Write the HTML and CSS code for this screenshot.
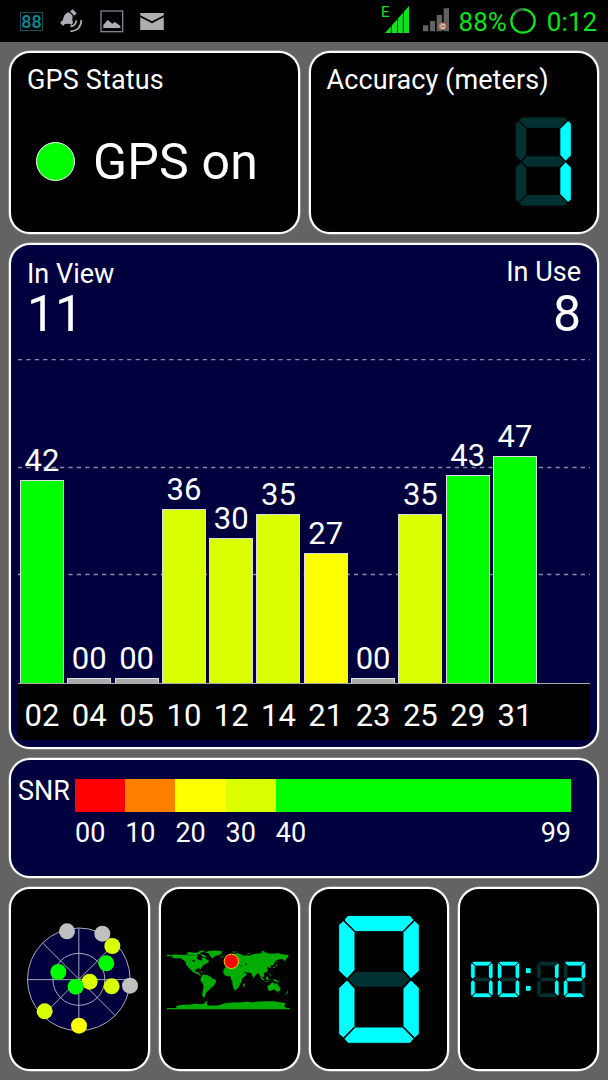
FILE: index.html
```html
<!DOCTYPE html>
<html lang="en">
<head>
<meta charset="utf-8">
<title>GPS Status</title>
<link rel="stylesheet" href="styles.css">
</head>
<body>
<svg class="defs" width="0" height="0" aria-hidden="true">
  <defs>
    <polygon id="a" points="28,0 214,0 226,14 192,49 50,49 16,14"/>
    <polygon id="f" points="14,16 49,51 49,164 25,190 0,166 0,28"/>
    <use id="b" href="#f" transform="translate(242 0) scale(-1 1)"/>
    <use id="e" href="#f" transform="translate(0 384) scale(1 -1)"/>
    <use id="c" href="#f" transform="translate(242 384) scale(-1 -1)"/>
    <use id="d" href="#a" transform="translate(0 384) scale(1 -1)"/>
    <polygon id="g" points="27,192 51,168 191,168 215,192 191,216 51,216"/>
    <g id="zero"><use href="#a"/><use href="#b"/><use href="#c"/><use href="#d"/><use href="#e"/><use href="#f"/><use href="#g" class="off"/></g>
    <g id="one"><g class="off"><use href="#a"/><use href="#d"/><use href="#e"/><use href="#f"/><use href="#g"/></g><use href="#b"/><use href="#c"/></g>
    <g id="two"><g class="off"><use href="#c"/><use href="#f"/></g><use href="#a"/><use href="#b"/><use href="#d"/><use href="#e"/><use href="#g"/></g>
  </defs>
</svg>

<header class="statusbar">
  <div class="notifications">
    <span class="lcd-badge">88</span>
    <svg class="i-sat" viewBox="176 28 72 72">
      <g fill="#aeaeb8">
        <path d="M192 47l10-9 6 1 9 9-1 12 2 10-4 5-8-3-13 1-7-8z"/>
        <path d="M209 35l8-6 12 12-7 7zM179 69l8-7 9 9-8 8z"/>
      </g>
      <g fill="none" stroke="#aeaeb8" stroke-width="5"><path d="M228 62Q227 79 210 80M243 61Q242 93 210 95"/></g>
    </svg>
    <svg class="i-img" viewBox="299 29 72 69"><rect x="302" y="32" width="65" height="62" fill="none" stroke="#83808f" stroke-width="4"/><path d="M309 83V74L322 59 336 70 344 65 360 77V83z" fill="#aeaeb8"/></svg>
    <svg class="i-mail" viewBox="420 38 72 52"><path d="M420 38h72v7l-36 18-36-18zM420 51l36 18 36-18v39h-72z" fill="#aeaeb0"/></svg>
  </div>
  <div class="system">
    <span class="net">E</span>
    <svg class="i-signal" viewBox="72 18 72 81"><path d="M72 99L144 18V99z" fill="#0be31d"/><path d="M91 18V99M109.500 18V99M127 18V99" stroke="#000" stroke-width="2.500"/></svg>
    <svg class="i-signal2" viewBox="186 24 78 72"><path d="M186 76h16v18h-16zM207 63h15v31h-15zM227 45h16v49h-16zM248 25h16v69h-16z" fill="#626262"/><circle cx="245" cy="79" r="10" fill="#bbb" stroke="#d8602c" stroke-width="4" stroke-dasharray="7 4"/><path d="M240 79h10" stroke="#e33" stroke-width="3"/></svg>
    <span class="pct">88%</span>
    <svg class="i-ring" viewBox="449 23 78 78"><circle cx="488" cy="62" r="35" fill="none" stroke="#0be31d" stroke-width="7"/><path d="M464 36A35 35 0 0 1 488 27" fill="none" stroke="#555" stroke-width="7"/></svg>
    <span class="time">0:12</span>
  </div>
</header>

<main class="board">
  <section class="card status">
    <h2>GPS Status</h2>
    <div class="state"><i class="led"></i><span>GPS on</span></div>
  </section>
  <section class="card accuracy">
    <h2>Accuracy (meters)</h2>
    <svg class="digit" viewBox="0 0 242 384"><use href="#one"/></svg>
  </section>

  <section class="card chart">
    <div class="counts">
      <div><h2>In View</h2><b>11</b></div>
      <div class="right"><h2>In Use</h2><b>8</b></div>
    </div>
    <div class="plot">
      <svg class="gridlines" width="572" height="217"><path d="M0 .5H572M0 108.500H572M0 215.500H572"/></svg>
      <div class="bars">
        <div class="col"><span>42</span><i class="green" style="height:203px"></i></div>
        <div class="col"><span>00</span><i class="none" style="height:5px"></i></div>
        <div class="col"><span>00</span><i class="none" style="height:5px"></i></div>
        <div class="col"><span>36</span><i class="lime" style="height:174px"></i></div>
        <div class="col"><span>30</span><i class="lime" style="height:145px"></i></div>
        <div class="col"><span>35</span><i class="lime" style="height:169px"></i></div>
        <div class="col"><span>27</span><i class="yellow" style="height:130px"></i></div>
        <div class="col"><span>00</span><i class="none" style="height:5px"></i></div>
        <div class="col"><span>35</span><i class="lime" style="height:169px"></i></div>
        <div class="col"><span>43</span><i class="green" style="height:208px"></i></div>
        <div class="col"><span>47</span><i class="green" style="height:227px"></i></div>
      </div>
    </div>
    <div class="ids"><span>02</span><span>04</span><span>05</span><span>10</span><span>12</span><span>14</span><span>21</span><span>23</span><span>25</span><span>29</span><span>31</span></div>
  </section>

  <section class="card snr">
    <h2>SNR</h2>
    <div class="scale">
      <div class="step red"><i></i><span>00</span></div>
      <div class="step orange"><i></i><span>10</span></div>
      <div class="step yellow"><i></i><span>20</span></div>
      <div class="step lime"><i></i><span>30</span></div>
      <div class="step green"><i></i><p><span>40</span><span>99</span></p></div>
    </div>
  </section>

  <nav class="tabs">
    <div class="card">
      <svg viewBox="27 20 422 552">
        <circle cx="236.500" cy="297" r="154" fill="#00003f"/>
        <g fill="none" stroke="#aaaab8" stroke-width="3"><circle cx="236.500" cy="297" r="154"/><circle cx="236.500" cy="297" r="78"/><path d="M82 298H391M236.500 143V451M128 188L346 406M346 188L128 406"/></g>
        <g fill="#c0c0c0"><circle cx="201" cy="153" r="24"/><circle cx="307" cy="160" r="24"/><circle cx="390" cy="316" r="24"/></g>
        <g fill="#d9ff00"><circle cx="337" cy="197" r="24"/><circle cx="269" cy="304" r="24"/><circle cx="335" cy="318" r="24"/><circle cx="134" cy="393" r="24"/></g>
        <g fill="#0f0"><circle cx="319" cy="249" r="24"/><circle cx="175" cy="275" r="24"/><circle cx="227" cy="319" r="24"/></g>
        <circle cx="237" cy="436" r="24" fill="#ff0"/>
      </svg>
    </div>
    <div class="card">
      <svg viewBox="15 -130 422 552">
        <!-- land masses in degrees, x = longitude, y = -latitude -->
        <g transform="translate(223 145) scale(1.022)" fill="#00ac00">
          <path d="M-180-71L-172-70-166-67-166-70-156-71-141-70-126-70-110-68-97-68-88-73-82-70-86-66-94-62-92-58-82-54-79-52-77-58-78-62-72-62-65-58-56-52-60-47-66-44-70-42-75-38-76-35-81-31-80-26-83-29-90-30-97-27-97-21-91-19-87-21-88-16-83-15-83-10-79-8-82-8-90-13-98-16-105-20-110-26-117-33-124-41-124-48-132-55-140-60-150-60-158-56-154-60-164-62-167-66-180-66z"/>
          <path d="M-123-76l9-2 12 2 12-1 7-5 18-1-8 4-10 3 4 4 9 3 8 6-7 1-10-5-12 0-15-1-12-2zM-70-77l15-5 20-1 16 2-1 8-8 4-12 3-6 6-5-3-5-9-5-3zM-24-65l10-1-2 3-6 0zM-85-22l8 1 5 2-7 0zM-72-19l7 1-6 0z"/>
          <path d="M-78-9l6-3 12 2 9 5 3 4 8 3 5 4-4 8-5 8-8 5-4 6-6 5-4 5-2 8-2 4-4-1-3-5 2-14 2-10-1-9-7-9-1-6z"/>
          <path d="M-10-37l1-6 8-1 1-4 8-4 1-5 8-2-6-5 2-5 12-6 12 3 6 4 20 0 14-5 14-1 14-4 18 5 18-1 18 2 15 2 4 4-4 3-2 2-3 6-4 4-3-5-9-2-12 4-4 5-6 9-7 2 0 6-4 2-3-6-4 5 4 6-6 6-8 3 3 7-4 5-5-5 2 8 4 4-3 1-5-7-3-8-4-6-6 5-5 5-2 6-4-6-3-8-8-3-6 0-8-4 2 4 7 4-6 7-9 4-4-9-5-8 0-6-11-1 2-4-4 0-5-3-2 2-7-7-4-2 0 2 6 5-3 3-6-8-8 4-6 6z"/>
          <path d="M-6-36l16-1 1 4 9 2 13 0 5 10 5 9 9-1-6 8-6 6-1 7-4 7-4 8-5 8-8 3-3-6-3-12 0-8-5-8 1-5-5-2-8 0-6-4-4-7 1-9 6-7zM44 14l5 1-3 10-3-2zM-5-58l4 2 2 4-6 2z"/>
          <path d="M96-6l8 7 4 5-4-1-7-7zM109-2l7-5 2 4-2 7-5-1zM118 0l4 0-1 5-2-1zM120-18l3 4 2 6-3-1zM106 7l10 1 5 1-5 1-9-2zM130 2l10 1 8 5 3 4-8-3-6-1-6-4zM114 22l7-4 8-7 6 2 3 4 4-6 5 9 6 7-1 8-7 4-7-4-5-3-11 4-4-1zM145 41l4 0-2 3zM173 35l4 4-4 4-4 4-2-1 6-6zM130-33l8-2 4-8 3 0-5 8-8 5zM142-52l3 0-1 6z"/>
          <path d="M52-72l10-4 5 0-11 5zM10-79l12-1 3 2-10 2zM95-79l10-2 2 3-8 1zM138-75l12-1 1 2-10 1z"/>
          <path d="M-180 86L-152 86-153 80-140 77-110 76-100 74-75 75-64 66-60 65-64 72-60 79-30 79-10 72 10 70 40 69 55 67 70 70 85 67 110 66 135 66 155 70 168 72 164 80 170 86 180 86V90H-180z"/>
        </g>
        <g fill="#000"><path d="M130 72l10-1 3 8-6 7-6-7zM253 104l8 2 7 2-8 0zM274 98l4 1 0 7-3-3zM116 89l8 1-3 4-6-2z"/></g>
        <circle cx="232" cy="93" r="21.500" fill="#f00" stroke="#fc0" stroke-width="3"/>
      </svg>
    </div>
    <div class="card">
      <svg class="big" viewBox="14 20 422 552"><use href="#zero" transform="translate(103 105)"/></svg>
    </div>
    <div class="card">
      <svg class="clock" viewBox="13 20 422 552">
        <use href="#zero" transform="translate(51 243) scale(.277 .283)"/>
        <use href="#zero" transform="translate(131 243) scale(.277 .283)"/>
        <path class="colon" d="M217 264h14v14h-14zM217 317h14v14h-14z"/>
        <use href="#one" transform="translate(249 243) scale(.277 .283)"/>
        <use href="#two" transform="translate(329 243) scale(.277 .283)"/>
      </svg>
    </div>
  </nav>
</main>
</body>
</html>
```

FILE: styles.css
```css
* { box-sizing: border-box; margin: 0; padding: 0; }

body {
  width: 608px;
  height: 1080px;
  overflow: hidden;
  background: #636363;
  color: #fff;
  font-family: Roboto, "Liberation Sans", sans-serif;
  font-size: 27px;
}

svg { display: block; }
.defs { position: absolute; }

/* status bar */
.statusbar {
  display: flex;
  justify-content: space-between;
  height: 42px;
  padding: 0 11px 0 20px;
  background: #000;
  color: #0be31d;
}
.notifications, .system { display: flex; align-items: flex-start; }
.lcd-badge {
  width: 23px;
  height: 19px;
  margin-top: 12px;
  border: 1px solid #17505c;
  color: #0a8c98;
  font-size: 18px;
  font-weight: 500;
  line-height: 18px;
  text-align: center;
}
.i-sat { width: 24px; height: 24px; margin: 9px 0 0 16px; }
.i-img { width: 24px; height: 23px; margin: 10px 0 0 17px; }
.i-mail { width: 24px; height: 17px; margin: 13px 0 0 16px; }
.net { font-size: 15px; line-height: 11px; margin-top: 7px; }
.i-signal { width: 24px; height: 27px; margin: 6px 14px 0 -5px; }
.i-signal2 { width: 26px; height: 24px; margin: 8px 10px 0 0; }
.pct, .time { font-size: 26px; line-height: 18px; margin-top: 13px; }
.i-ring { width: 26px; height: 26px; margin: 8px 11px 0 3px; }

/* cards */
.board {
  display: grid;
  grid-template-columns: 1fr 1fr;
  grid-template-rows: 183px 506px 120px 184px;
  gap: 9px;
  padding: 9px;
}
.card {
  border: 2px solid #fff;
  border-radius: 21px;
  background: #000;
  box-shadow: 0 0 0 .5px rgba(255, 255, 255, .5);
  overflow: hidden;
}
h2 { font-size: 27px; font-weight: 400; line-height: 19px; white-space: nowrap; }

.status { padding: 18px 16px; }
.status h2 { letter-spacing: .15px; }
.state {
  display: flex;
  align-items: center;
  gap: 18px;
  margin-top: 52px;
  padding-left: 9px;
  font-size: 50px;
  line-height: 38px;
}
.state span { padding-top: 1px; letter-spacing: .2px; }
.led {
  width: 39px;
  height: 39px;
  border: 1.500px solid #fff;
  border-radius: 50%;
  background: #0f0;
}

.accuracy { padding: 18px 26px 0 16px; }
.accuracy h2 { letter-spacing: .1px; }
.digit { width: 56.500px; height: 89px; margin: 27px 0 0 auto; }
.digit, .big, .clock { fill: #0ff; stroke: #000; stroke-width: 3; }
.clock { stroke-width: 8; }
.clock .colon { stroke: none; }
.off { fill: #003030; }

/* satellite chart */
.chart { grid-column: 1 / -1; padding: 0 7px; background: #00003f; }
.counts {
  display: flex;
  justify-content: space-between;
  height: 114px;
  padding: 20px 9px 0;
}
.counts b { display: block; margin-top: 13px; font-size: 50px; font-weight: 400; line-height: 35px; }
.right { text-align: right; }
.right h2 { margin-top: -2px; }
.right b { margin-top: 15px; }
.plot {
  position: relative;
  display: flex;
  align-items: flex-end;
  height: 325px;
  border-bottom: 1px solid #aaa;
}
.gridlines { position: absolute; left: 0; top: 0; }
.gridlines path { stroke: #8a8aa5; stroke-width: 1.500; stroke-dasharray: 4.200 4.200; }
.bars, .ids { display: flex; gap: 3.300px; padding-left: 2px; font-size: 31px; }
.bars { position: relative; align-items: flex-end; }
.col { width: 44px; text-align: center; }
.col span { display: block; margin-bottom: 8px; line-height: 22px; }
.col i { display: block; border: 1px solid #ddd; border-bottom: 0; }
.ids { height: 56px; padding-top: 21px; background: #000; line-height: 22px; }
.ids span { width: 44px; text-align: center; }
.col .green, .green i { background: #0f0; }
.col .lime, .lime i { background: #d9ff00; }
.col .yellow, .yellow i { background: #ff0; }
.col .none { background: #aaa; }
.red i { background: #f00; }
.orange i { background: #ff8000; }

/* SNR legend */
.snr {
  grid-column: 1 / -1;
  display: flex;
  padding: 19px 26px 0 7px;
  background: #00003f;
}
.snr h2 { width: 57px; margin-top: 3px; }
.scale { display: flex; flex: 1; }
.step { width: 50.200px; }
.step.green { flex: 1; }
.step i { display: block; height: 33px; margin-bottom: 12px; }
.step span { line-height: 19px; }
.step > span, .step p { display: flex; }
.step p { justify-content: space-between; }

.tabs { grid-column: 1 / -1; display: grid; grid-template-columns: repeat(4, 1fr); gap: 9px; }
.tabs svg { width: 140.670px; height: 184px; margin: -2px; }
```
